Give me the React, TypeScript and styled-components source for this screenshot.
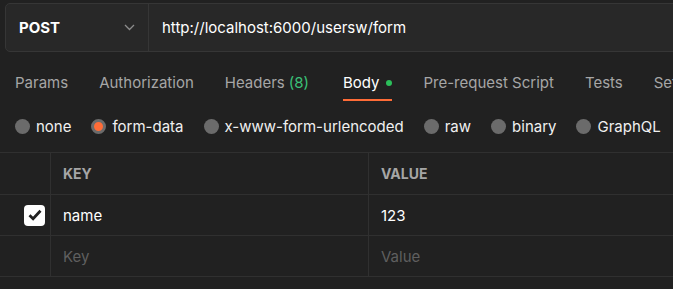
import * as React from "react";
import styled, { createGlobalStyle } from "styled-components";

const GlobalStyle = createGlobalStyle`
  html, body {
    margin: 0;
    padding: 0;
    background: #212121;
    overflow: hidden;
  }
  body {
    font-family: Inter, "Noto Sans", sans-serif;
    -webkit-font-smoothing: antialiased;
  }
`;

const Page = styled.div`
  width: 673px;
  height: 289px;
  overflow: hidden;
  background: #212121;
`;

const UrlBar = styled.div`
  display: flex;
  margin: 3px 0 0 5px;
  width: 720px;
  height: 47px;
  background: #282828;
  border: 1px solid #363636;
  border-radius: 5px;
`;

const MethodSelect = styled.div`
  display: flex;
  align-items: center;
  justify-content: space-between;
  width: 143px;
  padding: 0 13px 0 13px;
  box-sizing: border-box;
  border-right: 1px solid #363636;
  color: #ffffff;
  font-size: 15px;
  font-weight: 700;
`;

const UrlInput = styled.div`
  display: flex;
  align-items: center;
  padding-left: 13px;
  color: #ffffff;
  font-size: 15px;
`;

const Tabs = styled.div`
  display: flex;
  gap: 31px;
  padding-left: 15px;
  white-space: nowrap;
`;

const Tab = styled.div<{ $active?: boolean }>`
  display: flex;
  align-items: center;
  gap: 4px;
  padding: 22px 0 7px;
  font-size: 15px;
  line-height: 18px;
  color: ${(p) => (p.$active ? "#ffffff" : "#a6a6a6")};
  border-bottom: 2px solid ${(p) => (p.$active ? "#ff6c37" : "transparent")};
`;

const Count = styled.span`
  color: #3bc178;
  margin-right: 3px;
`;

const Dot = styled.span`
  width: 6px;
  height: 6px;
  border-radius: 50%;
  background: #2bbf5a;
  margin-left: 3px;
`;

const RadioRow = styled.div`
  display: flex;
  align-items: center;
  gap: 20px;
  height: 51px;
  padding-left: 15px;
  white-space: nowrap;
`;

const RadioItem = styled.label`
  display: flex;
  align-items: center;
  gap: 6px;
  color: #f0f0f0;
  font-size: 15px;
`;

const RadioCircle = styled.span<{ $checked?: boolean }>`
  box-sizing: border-box;
  width: 15px;
  height: 15px;
  border-radius: 50%;
  background: ${(p) => (p.$checked ? "#ff6c37" : "#6b6b6b")};
  border: ${(p) => (p.$checked ? "3px solid #6b6b6b" : "none")};
`;

const Table = styled.div`
  border-top: 1px solid #303030;
`;

const Row = styled.div<{ $header?: boolean }>`
  display: grid;
  grid-template-columns: 50px 318px 1fr;
  height: ${(p) => (p.$header ? 41 : 40)}px;
  border-bottom: 1px solid #303030;
`;

const Cell = styled.div<{ $muted?: boolean; $head?: boolean }>`
  display: flex;
  align-items: center;
  padding-left: 12px;
  border-left: 1px solid #303030;
  font-size: ${(p) => (p.$head ? 14 : 15)}px;
  font-weight: ${(p) => (p.$head ? 700 : 400)};
  color: ${(p) => (p.$head ? "#a6a6a6" : p.$muted ? "#5f5f5f" : "#ffffff")};
`;

const CheckCell = styled.div`
  display: flex;
  align-items: center;
  justify-content: flex-end;
  padding-right: 5px;
`;

const CheckBox = styled.span`
  display: flex;
  align-items: center;
  justify-content: center;
  width: 21px;
  height: 21px;
  border-radius: 4px;
  background: #ffffff;
`;

const Chevron = () => (
  <svg width="11" height="7" viewBox="0 0 11 7" fill="none">
    <path d="M1 1l4.5 4.5L10 1" stroke="#8c8c8c" strokeWidth="1.3" />
  </svg>
);

const Check = () => (
  <svg width="14" height="12" viewBox="0 0 14 12" fill="none">
    <path d="M1.5 6.2l3.6 3.5L12.5 1.8" stroke="#212121" strokeWidth="2.8" />
  </svg>
);

const tabs = ["Params", "Authorization", "Headers", "Body", "Pre-request Script", "Tests", "Settings"];
const bodyTypes = ["none", "form-data", "x-www-form-urlencoded", "raw", "binary", "GraphQL"];

export default function App() {
  return (
    <Page>
      <GlobalStyle />
      <UrlBar>
        <MethodSelect>
          POST
          <Chevron />
        </MethodSelect>
        <UrlInput>http://localhost:6000/usersw/form</UrlInput>
      </UrlBar>
      <Tabs>
        {tabs.map((t) => (
          <Tab key={t} $active={t === "Body"}>
            {t}
            {t === "Headers" && <Count>(8)</Count>}
            {t === "Body" && <Dot />}
          </Tab>
        ))}
      </Tabs>
      <RadioRow>
        {bodyTypes.map((b) => (
          <RadioItem key={b}>
            <RadioCircle $checked={b === "form-data"} />
            {b}
          </RadioItem>
        ))}
      </RadioRow>
      <Table>
        <Row $header>
          <CheckCell />
          <Cell $head>KEY</Cell>
          <Cell $head>VALUE</Cell>
        </Row>
        <Row>
          <CheckCell>
            <CheckBox>
              <Check />
            </CheckBox>
          </CheckCell>
          <Cell>name</Cell>
          <Cell>123</Cell>
        </Row>
        <Row>
          <CheckCell />
          <Cell $muted>Key</Cell>
          <Cell $muted>Value</Cell>
        </Row>
      </Table>
    </Page>
  );
}
